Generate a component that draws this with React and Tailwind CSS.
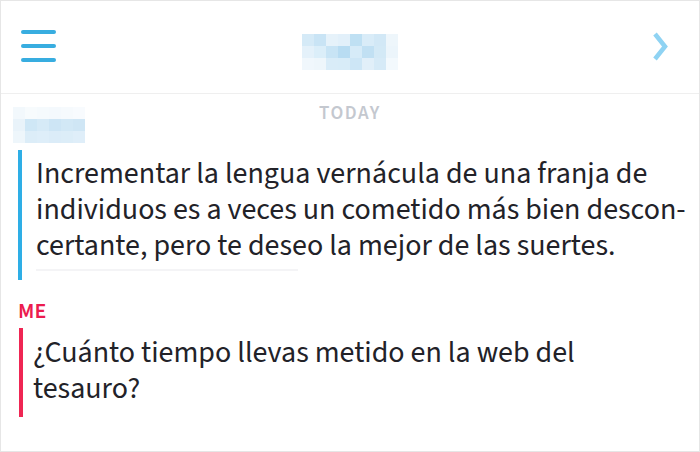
import React from 'react';

// Pixelated (blurred-out) contact name in the header
const titleBlocks = [
  ['bg-[#d5eaf7]', 'bg-[#c9e4f5]', 'bg-[#e6f2fa]', 'bg-[#e2f0fa]', 'bg-[#bfe0f3]', 'bg-[#d9ecf8]', 'bg-[#d2e8f6]', 'bg-[#eef6fb]'],
  ['bg-[#e4f1fa]', 'bg-[#dbeef9]', 'bg-[#c8e4f5]', 'bg-[#b8dcf2]', 'bg-[#d6ebf8]', 'bg-[#c1e0f3]', 'bg-[#d3e9f6]', 'bg-[#ecf5fb]'],
  ['bg-[#f0f7fc]', 'bg-[#eef6fb]', 'bg-[#d9ecf8]', 'bg-[#d8ecf8]', 'bg-[#cde6f6]', 'bg-[#e1eff9]', 'bg-[#d6eaf7]', 'bg-[#f3f9fd]'],
];

// Pixelated sender name above the first message
const nameBlocks = [
  ['bg-[#f2f8fc]', 'bg-[#f7fbfd]', 'bg-[#f5fafd]', 'bg-[#f4f9fd]', 'bg-[#f6fafd]', 'bg-[#f8fbfe]'],
  ['bg-[#e9f3fa]', 'bg-[#cfe7f6]', 'bg-[#d6eaf7]', 'bg-[#cde5f5]', 'bg-[#d2e8f6]', 'bg-[#cfe6f5]'],
  ['bg-[#eef6fb]', 'bg-[#dcedf8]', 'bg-[#deeef9]', 'bg-[#dbecf8]', 'bg-[#dcedf8]', 'bg-[#dfeef9]'],
];

const Pixels = ({ rows }) => (
  <div className="flex flex-col">
    {rows.map((row, i) => (
      <div key={i} className="flex">
        {row.map((c, j) => (
          <div key={j} className={`w-[12px] h-[12px] ${c}`} />
        ))}
      </div>
    ))}
  </div>
);

export default function App() {
  return (
    <div className="w-[700px] h-[452px] bg-white border border-[#e6e6e6] overflow-hidden font-['Source_Sans_3','Source_Sans_Pro',Lato,sans-serif]">
      {/* header */}
      <div className="grid grid-cols-[1fr_auto_1fr] items-start h-[93px] border-b border-[#efefef]">
        <div className="flex flex-col gap-[10px] ml-[20px] mt-[29px]">
          <div className="w-[35px] h-[4px] rounded-full bg-[#38ade0]" />
          <div className="w-[35px] h-[4px] rounded-full bg-[#38ade0]" />
          <div className="w-[35px] h-[4px] rounded-full bg-[#38ade0]" />
        </div>
        <div className="mt-[33px]">
          <Pixels rows={titleBlocks} />
        </div>
        <div className="flex justify-end mr-[31px] mt-[31px]">
          <svg width="16" height="29" viewBox="0 0 16 29">
            <polyline points="3,2 13,14.5 3,27" fill="none" stroke="#8fd3f3" strokeWidth="4.5" strokeLinejoin="miter" />
          </svg>
        </div>
      </div>

      {/* date row + sender */}
      <div className="grid grid-cols-[1fr_auto_1fr] items-start mt-[9px]">
        <div className="ml-[12px] mt-[4px]">
          <Pixels rows={nameBlocks} />
        </div>
        <div className="text-[19px] leading-[22px] font-semibold tracking-[0.08em] text-[#c4c8cf]">TODAY</div>
        <div />
      </div>

      {/* friend's message */}
      <div className="flex mt-[7px] ml-[17px]">
        <div className="w-[4px] bg-[#2eaee6]" />
        <div className="pl-[14px] pt-[6px] pb-[9px]">
          <p className="text-[30px] leading-[36px] text-[#222228]">
            Incrementar la lengua vernácula de una franja de
            <br />
            individuos es a veces un cometido más bien descon-
            <br />
            certante, pero te deseo la mejor de las suertes.
          </p>
          <div className="mt-[5px] h-[2px] w-[262px] bg-[#f4f4f6]" />
        </div>
      </div>

      {/* my message */}
      <div className="mt-[19px] ml-[17px] text-[22px] leading-[24px] font-semibold text-[#ec1c4f]">ME</div>
      <div className="flex mt-[5px] ml-[18px]">
        <div className="w-[4px] bg-[#ef2653]" />
        <div className="pl-[10px] pt-[7px] pb-[10px]">
          <p className="text-[30px] leading-[36px] text-[#222228]">
            ¿Cuánto tiempo llevas metido en la web del
            <br />
            tesauro?
          </p>
        </div>
      </div>
    </div>
  );
}
